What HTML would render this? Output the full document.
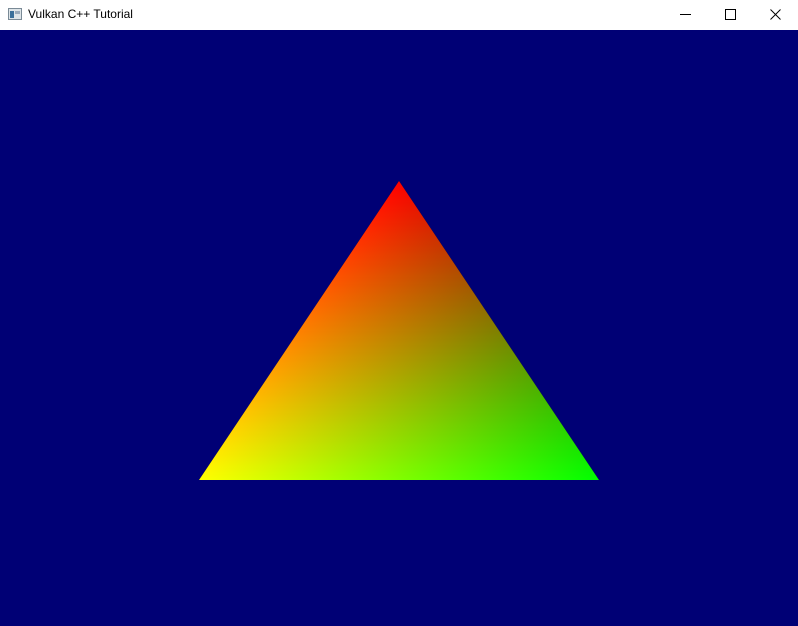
<!DOCTYPE html>
<html><head><meta charset="utf-8"><style>
html,body{margin:0;padding:0;width:798px;height:626px;overflow:hidden;background:#000075}
.tb{position:absolute;left:0;top:0;width:798px;height:30px;background:#fff}
.t{position:absolute;left:28px;top:7px;font:12px "Liberation Sans",sans-serif;color:#000}
</style></head><body>
<div class="tb">
<svg style="position:absolute;left:8px;top:8px" width="14" height="13"><rect x="0.5" y="0.5" width="13" height="11" fill="#dde4e8" stroke="#7a8a96"/><rect x="2" y="3" width="4" height="7" fill="#3a6f9a"/><rect x="7" y="3" width="5" height="3" fill="#9ab"/></svg>
<div class="t">Vulkan C++ Tutorial</div>
<svg style="position:absolute;left:660px;top:0" width="138" height="30">
<line x1="20" y1="14.5" x2="31" y2="14.5" stroke="#000" stroke-width="1"/>
<rect x="65.5" y="9.5" width="10" height="10" fill="none" stroke="#000"/>
<line x1="110.5" y1="9.5" x2="120.5" y2="19.5" stroke="#000"/>
<line x1="120.5" y1="9.5" x2="110.5" y2="19.5" stroke="#000"/>
</svg>
</div>
<svg style="position:absolute;left:0;top:0" width="798" height="626">
<defs>
<linearGradient id="r" gradientUnits="userSpaceOnUse" x1="599" y1="480" x2="322.6" y2="295.2"><stop offset="0" stop-color="#000"/><stop offset="1" stop-color="#f00"/></linearGradient>
<linearGradient id="g" gradientUnits="userSpaceOnUse" x1="399" y1="181" x2="399" y2="480"><stop offset="0" stop-color="#000"/><stop offset="1" stop-color="#0f0"/></linearGradient>
</defs>
<g style="isolation:isolate">
<polygon points="399,181 199,480 599,480" fill="url(#r)"/>
<polygon points="399,181 199,480 599,480" fill="url(#g)" style="mix-blend-mode:screen"/>
</g>
</svg>
</body></html>
